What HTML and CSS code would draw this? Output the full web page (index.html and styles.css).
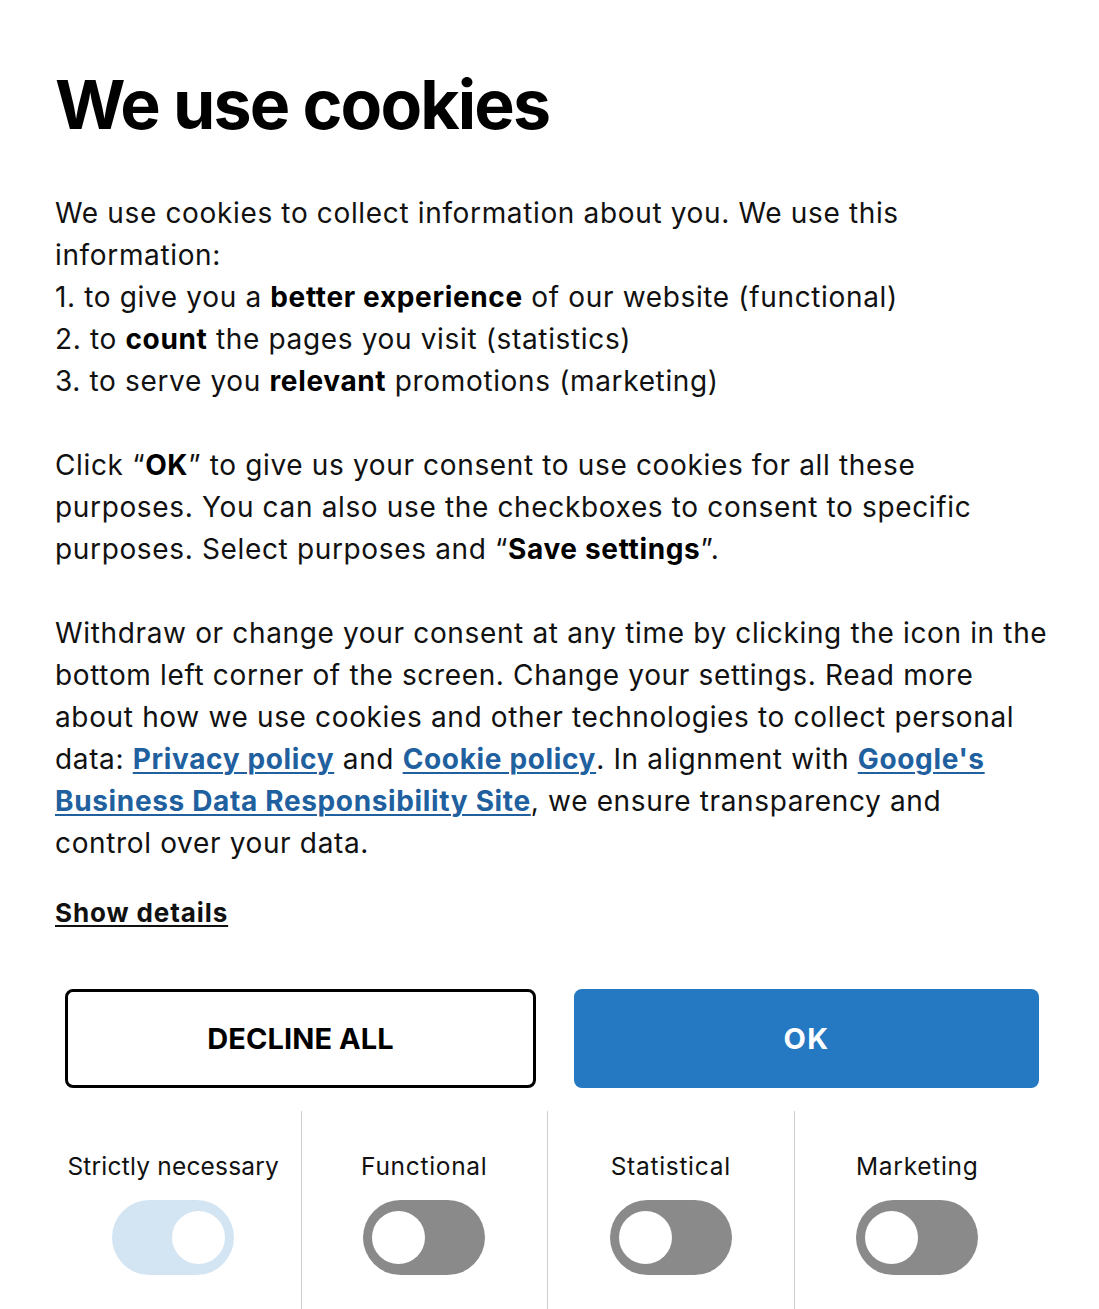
FILE: index.html
```html
<!DOCTYPE html>
<html lang="en">
<head>
<meta charset="utf-8">
<title>We use cookies</title>
<link rel="stylesheet" href="styles.css">
</head>
<body>
<div class="dialog">
  <h1 class="title">We use cookies</h1>
  <div class="text">
    <p>We use cookies to collect information about you. We use this<br>information:<br>1. to give you a <b>better experience</b> of our website (functional)<br>2. to <b>count</b> the pages you visit (statistics)<br>3. to serve you <b>relevant</b> promotions (marketing)</p>
    <p>Click “<b>OK</b>” to give us your consent to use cookies for all these<br>purposes. You can also use the checkboxes to consent to specific<br>purposes. Select purposes and “<b>Save settings</b>”.</p>
    <p>Withdraw or change your consent at any time by clicking the icon in the<br>bottom left corner of the screen. Change your settings. Read more<br>about how we use cookies and other technologies to collect personal<br>data: <a href="#" class="link">Privacy policy</a> and <a href="#" class="link">Cookie policy</a>. In alignment with <a href="#" class="link">Google's<br>Business Data Responsibility Site</a>, we ensure transparency and<br>control over your data.</p>
  </div>
  <a href="#" class="details">Show details</a>
  <div class="actions">
    <button class="btn btn-outline">DECLINE ALL</button>
    <button class="btn btn-primary">OK</button>
  </div>
  <div class="purposes">
    <div class="purpose purpose-first">
      <span class="purpose-label">Strictly necessary</span>
      <span class="toggle toggle-on toggle-disabled"><span class="knob"></span></span>
    </div>
    <div class="purpose">
      <span class="purpose-label">Functional</span>
      <span class="toggle"><span class="knob"></span></span>
    </div>
    <div class="purpose">
      <span class="purpose-label">Statistical</span>
      <span class="toggle"><span class="knob"></span></span>
    </div>
    <div class="purpose">
      <span class="purpose-label">Marketing</span>
      <span class="toggle"><span class="knob"></span></span>
    </div>
  </div>
</div>
</body>
</html>
```

FILE: styles.css
```css
* { box-sizing: border-box; }
html, body { margin: 0; padding: 0; background: #fff; }
body {
  font-family: Inter, "Liberation Sans", sans-serif;
  color: #111;
}
.dialog {
  padding: 56px 56px 0 56px;
  width: 1099px;
  overflow: hidden;
}
.title {
  font-size: 68px;
  font-weight: 700;
  letter-spacing: -1.9px;
  line-height: 1;
  margin: 14px 0 54px -1px;
  color: #000;
}
.text { font-size: 28px; line-height: 42px; letter-spacing: 0.65px; margin-left: -1px; }
.text p { margin: 0 0 42px 0; white-space: nowrap; }
.text b { font-weight: 700; color: #000; }
.link { color: #21609f; font-weight: 700; text-decoration: underline; text-underline-offset: 3px; text-decoration-thickness: 2px; }
.details {
  display: inline-block;
  font-size: 26px;
  font-weight: 700;
  color: #111;
  margin-top: -14px;
  margin-left: -1px;
  letter-spacing: 0.9px;
  text-underline-offset: 3px;
  text-decoration-thickness: 2px;
}
.actions {
  display: flex;
  gap: 38px;
  margin: 61px 4px 0 9px;
}
.btn {
  flex: 1 1 0;
  width: 0;
  height: 99px;
  border-radius: 8px;
  font-family: inherit;
  font-size: 29px;
  font-weight: 700;
  letter-spacing: 0.1px;
  cursor: pointer;
}
.btn-outline { background: #fff; border: 3px solid #000; color: #000; }
.btn-primary { background: #2479c2; border: none; color: #fff; letter-spacing: 1.5px; }
.purposes {
  display: grid;
  grid-template-columns: repeat(4, 1fr);
  margin: 23px 3px 0 -2px;
}
.purpose {
  display: flex;
  flex-direction: column;
  align-items: center;
  padding-top: 40px;
  height: 200px;
}
.purpose-first { padding-right: 8px; }
.purpose + .purpose { border-left: 1px solid #cfcfcf; }
.purpose-label { font-size: 24.5px; line-height: 30px; color: #111; letter-spacing: 0.7px; }
.purpose-first .purpose-label { letter-spacing: 0.2px; }
.toggle {
  margin-top: 19px;
  width: 122px;
  height: 75px;
  border-radius: 38px;
  background: #8a8a8a;
  display: flex;
  align-items: center;
  padding: 0 9px;
}
.knob { width: 53px; height: 53px; border-radius: 50%; background: #fff; }
.toggle-on { justify-content: flex-end; }
.toggle-disabled { background: #d3e4f3; }
```
